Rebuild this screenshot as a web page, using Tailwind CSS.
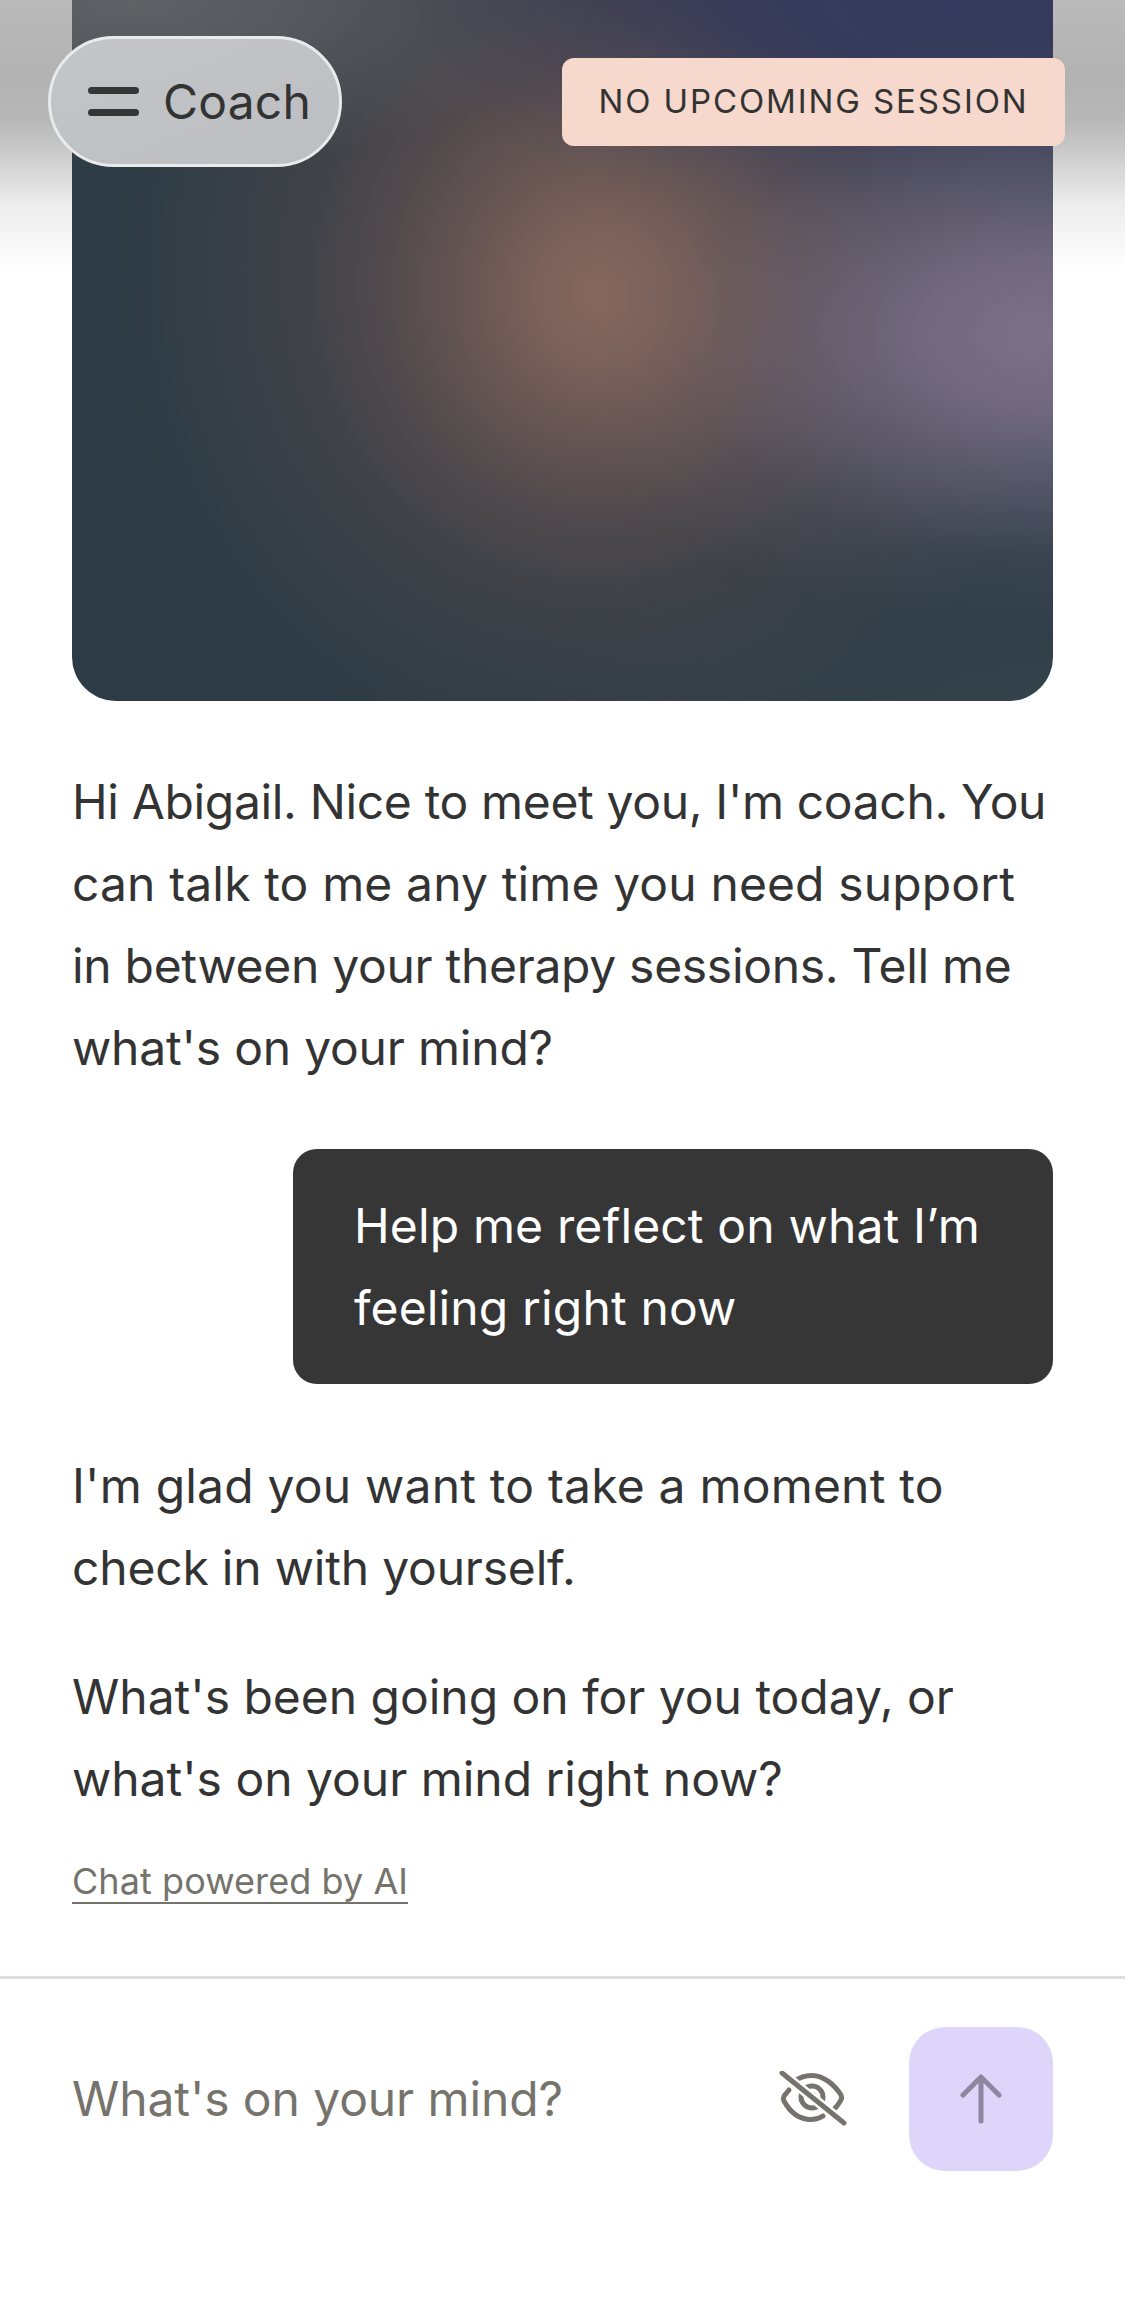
<!doctype html>
<html>
<head>
<meta charset="utf-8">
<script src="https://cdn.jsdelivr.net/npm/@tailwindcss/browser@4"></script>
</head>
<body>
<main class="relative w-[1125px] h-[2322px] overflow-hidden bg-white font-['Inter',sans-serif] text-[#333333] text-[48px] leading-[82px]">
  <div class="absolute inset-x-0 top-0 h-[270px] bg-[linear-gradient(180deg,#bababa_0%,#b2b2b2_30%,#b8b8b8_45%,#cdcdcd_58%,#ececec_75%,#ffffff_100%)]"></div>
  <div class="relative mx-[72px] h-[701px] rounded-b-[44px] bg-[#2c3b45] bg-[radial-gradient(ellipse_290px_310px_at_525px_295px,rgba(134,104,95,1)_0%,rgba(134,104,95,0.72)_25%,rgba(134,104,95,0.35)_50%,rgba(134,104,95,0.1)_75%,rgba(134,104,95,0)_100%),radial-gradient(ellipse_500px_300px_at_980px_335px,rgba(124,112,136,1)_0%,rgba(124,112,136,0.85)_25%,rgba(124,112,136,0.5)_50%,rgba(124,112,136,0.15)_75%,rgba(124,112,136,0)_100%),radial-gradient(ellipse_560px_230px_at_880px_0px,rgba(54,58,94,1)_0%,rgba(54,58,94,0.85)_30%,rgba(54,58,94,0.45)_60%,rgba(54,58,94,0)_100%),radial-gradient(ellipse_460px_170px_at_60px_0px,rgba(96,99,102,1)_0%,rgba(96,99,102,0.75)_35%,rgba(96,99,102,0.3)_70%,rgba(96,99,102,0)_100%),radial-gradient(ellipse_480px_520px_at_520px_270px,rgba(84,74,76,1)_0%,rgba(84,74,76,0.85)_35%,rgba(84,74,76,0.45)_65%,rgba(84,74,76,0)_100%),radial-gradient(ellipse_520px_160px_at_980px_700px,rgba(52,66,76,1)_0%,rgba(52,66,76,0)_100%)]"></div>

  <header class="absolute inset-x-0 top-[36px] flex items-center justify-between pl-[48px] pr-[60px]">
    <button class="flex h-[131px] w-[294px] items-center gap-[24px] rounded-full border-[3px] border-[#e9eaec] bg-[linear-gradient(160deg,#c3c5c9,#bcbec2)] pl-[37px] tracking-[0.2px]">
      <span class="flex w-[51px] flex-col gap-[15px]">
        <span class="h-[7px] rounded-full bg-[#363636]"></span>
        <span class="h-[7px] rounded-full bg-[#363636]"></span>
      </span>
      <span>Coach</span>
    </button>
    <div class="flex h-[88px] w-[503px] items-center justify-center rounded-[12px] bg-[#f7d8cd] text-[33px] leading-none tracking-[1.9px]">NO UPCOMING SESSION</div>
  </header>

  <section class="relative px-[72px]">
    <p class="mt-[60px] whitespace-nowrap tracking-[-0.2px]"><span class="tracking-[-0.35px]">Hi Abigail. Nice to meet you, I'm coach. You</span><br><span class="tracking-[0.13px]">can talk to me any time you need support</span><br><span class="tracking-[-0.3px]">in between your therapy sessions. Tell me</span><br>what's on your mind?</p>
    <div class="mt-[60px] ml-[221px] rounded-[24px] bg-[#363636] pt-[36px] pr-[60px] pb-[35px] pl-[61px] text-white tracking-[0.15px]">Help me reflect on what I’m feeling right now</div>
    <p class="mt-[61px] whitespace-nowrap"><span class="tracking-[0.2px]">I'm glad you want to take a moment to</span><br><span class="tracking-[-0.2px]">check in with yourself.</span></p>
    <p class="mt-[47px] whitespace-nowrap tracking-[-0.02px]">What's been going on for you today, or<br>what's on your mind right now?</p>
    <a class="mt-[41px] block w-max border-b-2 border-[#75736b] text-[36px] leading-[41px] tracking-[0.07px] text-[#75736b]">Chat powered by AI</a>
  </section>

  <footer class="mt-[72px] flex h-[243px] items-center border-t-[3px] border-[#dfddd6] px-[72px]">
    <span class="flex-1 tracking-[-0.1px] text-[#75736b]">What's on your mind?</span>
    <svg class="mr-[62px]" width="68" height="56" viewBox="0 0 68 56" fill="none" stroke="#75736b" stroke-width="5" stroke-linecap="round" stroke-linejoin="round">
      <path d="M16 10C21 6 26 4.500 33 4.500C44 4.500 55 13 62 24C63 26 63 27 62 29C59 34 56 38 52 41"/>
      <path d="M10 19L5 25C4 27 4 28 5 30C11 41 20 48.500 32 48.500C36 48.500 40 47.500 44 45"/>
      <circle cx="33" cy="26" r="11"/>
      <circle cx="33" cy="26" r="5" fill="#75736b" stroke="none"/>
      <path d="M3 2L65 52" stroke="#ffffff" stroke-width="10" stroke-linecap="butt"/>
      <path d="M3 2L65 52"/>
    </svg>
    <button class="flex size-[144px] shrink-0 items-center justify-center rounded-[36px] bg-[#ded6fa]">
      <svg width="42" height="50" viewBox="0 0 42 50" fill="none" stroke="#8b889f" stroke-width="5" stroke-linecap="round" stroke-linejoin="round"><path d="M21 47V3M3 21L21 3L39 21"/></svg>
    </button>
  </footer>
</main>
</body>
</html>
